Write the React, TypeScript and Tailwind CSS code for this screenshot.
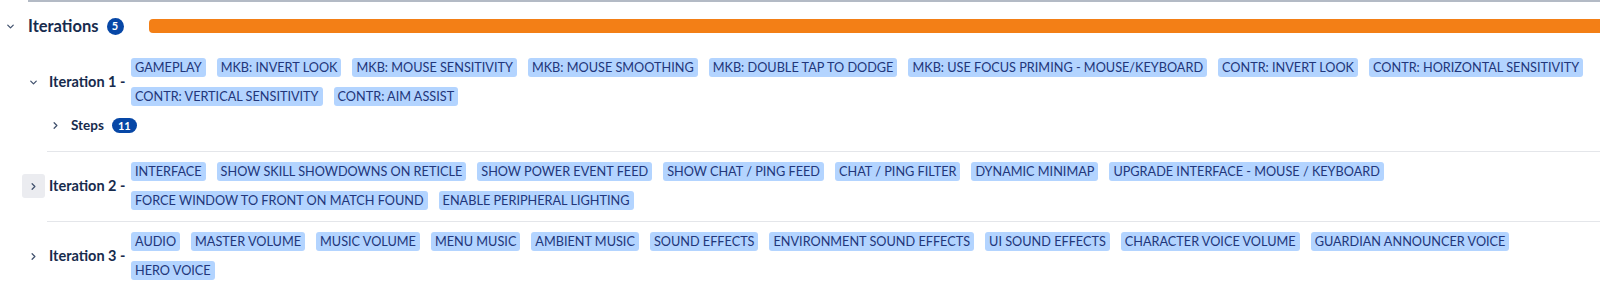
import { ChevronDown, ChevronRight } from 'lucide-react';

type Iteration = {
  name: string;
  open: boolean;
  active?: boolean;
  tags: string[];
  steps?: number;
};

const ITERATIONS: Iteration[] = [
  {
    name: 'Iteration 1 -',
    open: true,
    steps: 11,
    tags: [
      'GAMEPLAY',
      'MKB: INVERT LOOK',
      'MKB: MOUSE SENSITIVITY',
      'MKB: MOUSE SMOOTHING',
      'MKB: DOUBLE TAP TO DODGE',
      'MKB: USE FOCUS PRIMING - MOUSE/KEYBOARD',
      'CONTR: INVERT LOOK',
      'CONTR: HORIZONTAL SENSITIVITY',
      'CONTR: VERTICAL SENSITIVITY',
      'CONTR: AIM ASSIST',
    ],
  },
  {
    name: 'Iteration 2 -',
    open: false,
    active: true,
    tags: [
      'INTERFACE',
      'SHOW SKILL SHOWDOWNS ON RETICLE',
      'SHOW POWER EVENT FEED',
      'SHOW CHAT / PING FEED',
      'CHAT / PING FILTER',
      'DYNAMIC MINIMAP',
      'UPGRADE INTERFACE - MOUSE / KEYBOARD',
      'FORCE WINDOW TO FRONT ON MATCH FOUND',
      'ENABLE PERIPHERAL LIGHTING',
    ],
  },
  {
    name: 'Iteration 3 -',
    open: false,
    tags: [
      'AUDIO',
      'MASTER VOLUME',
      'MUSIC VOLUME',
      'MENU MUSIC',
      'AMBIENT MUSIC',
      'SOUND EFFECTS',
      'ENVIRONMENT SOUND EFFECTS',
      'UI SOUND EFFECTS',
      'CHARACTER VOICE VOLUME',
      'GUARDIAN ANNOUNCER VOICE',
      'HERO VOICE',
    ],
  },
];

function Tag({ label }: { label: string }) {
  return (
    <span className="h-[19px] px-[4px] rounded-[3px] bg-[#b3d4ff] text-[12.7px] leading-[19px] text-[#22367a] whitespace-nowrap">
      {label}
    </span>
  );
}

function IterationRow({ it }: { it: Iteration }) {
  const Icon = it.open ? ChevronDown : ChevronRight;
  return (
    <div className="flex flex-col">
      <div className="flex items-center pl-[22px]">
        <button
          className={`w-[23px] h-[24px] flex items-center justify-center rounded-[3px] text-[#42526e] ${
            it.active ? 'bg-[#ebecf0]' : ''
          }`}
        >
          <Icon size={11} strokeWidth={2.75} />
        </button>
        <span className="ml-[4px] w-[82px] shrink-0 text-[14.5px] font-bold text-[#172b4d] whitespace-nowrap">
          {it.name}
        </span>
        <div className="flex-1 flex flex-wrap gap-x-[11px] gap-y-[10px]">
          {it.tags.map((t) => (
            <Tag key={t} label={t} />
          ))}
        </div>
      </div>

      {/* Nested steps group */}
      {it.steps !== undefined && (
        <div className="mt-[11px] mb-[7px] h-[16px] flex items-center pl-[44px]">
          <span className="w-[23px] flex items-center justify-center text-[#42526e]">
            <ChevronRight size={11} strokeWidth={2.75} />
          </span>
          <span className="ml-[4px] text-[13.5px] font-bold text-[#172b4d]">Steps</span>
          <span className="ml-[8px] h-[15px] px-[6px] rounded-full bg-[#0747a6] text-white text-[11px] font-bold leading-[15px]">
            {it.steps}
          </span>
        </div>
      )}
    </div>
  );
}

export default function App() {
  return (
    <div
      className="w-full h-[290px] bg-white overflow-hidden"
      style={{ fontFamily: '"Segoe UI", Lato, "Liberation Sans", sans-serif' }}
    >
      <div className="ml-[28px] h-[2px] bg-[#b3bac5]" />

      {/* Header */}
      <div className="mt-[17px] h-[14px] flex items-center">
        <span className="w-[21px] flex items-center justify-center text-[#42526e]">
          <ChevronDown size={11} strokeWidth={2.75} />
        </span>
        <span className="ml-[7px] text-[16.5px] font-bold leading-none text-[#172b4d]">Iterations</span>
        <span className="ml-[8px] w-[17px] h-[17px] rounded-full bg-[#0747a6] text-white text-[11px] font-bold flex items-center justify-center">
          5
        </span>
        <div className="ml-[25px] flex-1 h-[14px] rounded-l-[4px] bg-[#f37f16]" />
      </div>

      <div className="mt-[25px] flex flex-col">
        {ITERATIONS.map((it, i) => (
          <div key={it.name} className="flex flex-col">
            {i > 0 && <div className="ml-[47px] mt-[11px] mb-[10px] h-[1px] bg-[#e4e6ea]" />}
            <IterationRow it={it} />
          </div>
        ))}
      </div>
    </div>
  );
}
